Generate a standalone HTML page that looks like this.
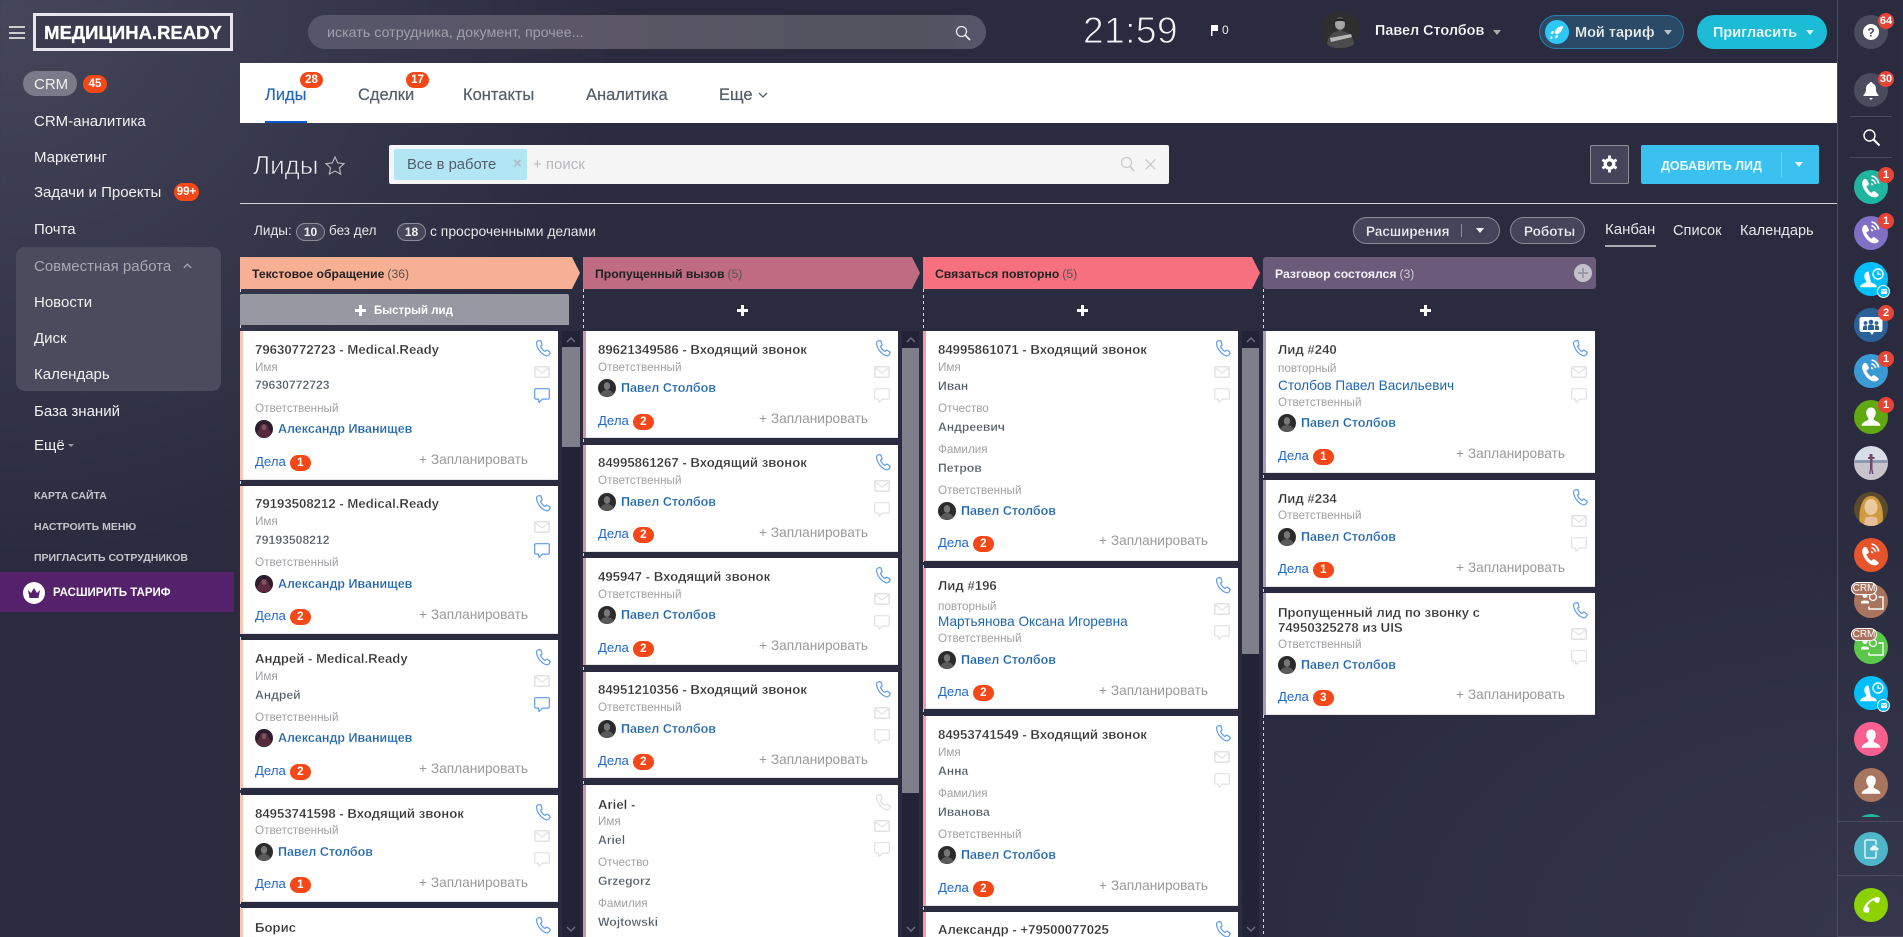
<!DOCTYPE html>
<html lang="ru"><head><meta charset="utf-8"><title>Лиды</title>
<style>
html,body{margin:0;padding:0;width:1903px;height:937px;overflow:hidden}
body{position:relative;font-family:"Liberation Sans","Noto Sans CJK SC",sans-serif;color:#eee;
background:radial-gradient(ellipse 620px 560px at 0 0,#45465a 0,rgba(69,70,90,0) 100%),radial-gradient(ellipse 700px 420px at 100% 100%,#36374d 0,rgba(54,55,77,0) 100%),#2a2b3e}
.a{position:absolute;white-space:nowrap;line-height:20px}
svg{position:absolute;overflow:visible}
.m{left:34px;font-size:15px;color:#f0f0f0;margin-top:1px}
.s{left:34px;font-size:10.5px;font-weight:700;color:#c4c4cc;margin-top:1px}
.tb{top:85px;font-size:16.5px;color:#535c69;-webkit-text-stroke:.2px}
.bd{position:absolute;background:#f54819;color:#fff;font-weight:700;font-size:11.5px;text-align:center;border-radius:10px}
.cnt{top:221px;font-size:13.5px;color:#e6e6ea}
.pl{position:absolute;top:223px;width:27px;height:16px;border:1px solid #8d8e9b;border-radius:9px;background:#45465a;text-align:center;font-size:12px;font-weight:700;line-height:16px;color:#f0f0f0}
.h{position:absolute;top:257px;height:32px;line-height:34px;font-size:12.2px;font-weight:700;color:#222;padding-left:12px;box-sizing:border-box;clip-path:polygon(0 0,calc(100% - 8px) 0,100% 50%,calc(100% - 8px) 100%,0 100%)}
.h span{font-weight:400;color:#555;margin-left:3px}
.dl{position:absolute;top:289px;bottom:0;width:1px;background:linear-gradient(#d8d8de 50%,transparent 50%) 0 0/1px 6px}
.pp{position:absolute;top:305px;font-size:0;width:11px;height:11px;background:linear-gradient(#fff,#fff) center/11px 3px no-repeat,linear-gradient(#fff,#fff) center/3px 11px no-repeat}
.tr{position:absolute;top:331px;bottom:0;width:18px;background:#222336}
.tr u{position:absolute;left:0;width:100%;background:#7f7f8b;display:block}
.tr svg{left:4px}
.c{position:absolute;background:#fff;box-shadow:inset 0 -1px 0 #e4e4e6;overflow:hidden}
.c::before{content:"";position:absolute;left:0;top:0;bottom:0;width:3px}
.c1::before{background:#fcc6b0}.c2::before{background:#d993a5}.c3::before{background:#f99aa4}.c4::before{background:#a89db4}
.c div{position:absolute;left:15px;white-space:nowrap;line-height:20px}
.c .t{font-size:13.2px;font-weight:700;color:#333;margin-top:1px;-webkit-text-stroke:.25px #fff}
.c .l{font-size:11.7px;color:#a0a0a4;margin-top:1px}
.c .v{font-size:12.2px;font-weight:700;color:#535c69;margin-top:1px;-webkit-text-stroke:.25px #fff}
.c .k{font-size:13.6px;color:#1f66b0;margin-top:1px}
.c .n{left:38px;font-size:12.5px;font-weight:700;color:#1f66b0;-webkit-text-stroke:.2px #fff}
.c .d{font-size:13.2px;color:#2067d0}
.c .d i{display:inline-block;position:relative;top:0;margin-left:4px;width:21px;height:16px;line-height:16px;border-radius:8px;background:#f54819;color:#fff;font-style:normal;font-weight:700;font-size:11.5px;text-align:center}
.c .z{left:auto;right:30px;font-size:13.7px;color:#999}
.av{left:15px;width:18px;height:18px}
.ip{right:7px;top:9px;width:16px;height:17px;color:#5d9bea}
.im{right:8px;top:35px;width:16px;height:12px;color:#e2e2e2}
.ich{right:8px;top:57px;width:16px;height:15px;color:#e2e2e2}
.blu{color:#5d9bea}.gry{color:#dedede}
.cr{position:absolute;left:1854px;width:34px;height:34px;border-radius:50%;overflow:visible}
.cr svg{left:0;top:0}
.rb{position:absolute;left:24px;top:-3px;width:16px;height:16px;border-radius:50%;background:#e64436;color:#fff;font-size:11px;font-weight:700;text-align:center;line-height:16px}
.crm{position:absolute;left:-3px;top:-2px;width:24px;height:11px;border:1px solid #fff;border-radius:7px;background:#a8745f;color:#fff;font-size:10px;line-height:11px;text-align:center}
.mb{position:absolute;left:23px;top:23px;width:11px;height:11px;border:1.5px solid #fff;border-radius:50%;background:#00bfff}
.mb svg{left:2.5px;top:2.5px}
.ln{position:absolute;left:1837px;height:1px;background:#494a5e}
.ln2{position:absolute;left:1850px;width:42px;height:1px;background:#494a5e}
</style></head><body>
<svg width="0" height="0" style="position:absolute"><defs>
<symbol id="ph" viewBox="0 0 16 17"><path d="M1.5 3C1.5 2 2.500 1 3.500.8L5 .6c.5 0 .8.2 1 .6l1 3.300c.1.500-.1.900-.5 1.100l-1 .6c.8 2.300 2.500 4.300 4.500 5.300l1-1c.3-.3.800-.4 1.200-.2l2.600 1.700c.4.300.5.800.2 1.200l-1 1.600c-.5.800-1.500 1.200-2.500 1C6.500 14.500 1.800 8.500 1.500 3z" fill="none" stroke="currentColor" stroke-width="1.200" stroke-linejoin="round"/></symbol>
<symbol id="ml" viewBox="0 0 16 12"><rect x=".8" y=".8" width="14.4" height="10.4" rx="1.200" fill="none" stroke="currentColor" stroke-width="1.500"/><path d="M1.500 2l6.500 5 6.500-5" fill="none" stroke="currentColor" stroke-width="1.200"/></symbol>
<symbol id="ch" viewBox="0 0 16 15"><path d="M2 .7h12c.7 0 1.300.6 1.300 1.300v7.800c0 .7-.6 1.300-1.300 1.300H8.500l-3.500 3.300-.5-3.300H2c-.7 0-1.300-.6-1.300-1.300V2C.7 1.300 1.300.7 2 .7z" fill="none" stroke="currentColor" stroke-width="1.200" stroke-linejoin="round"/></symbol>
<symbol id="a1" viewBox="0 0 18 18"><circle cx="9" cy="9" r="9" fill="#2b2b2b"/><ellipse cx="9" cy="7" rx="3.200" ry="3.900" fill="#777"/><path d="M2.500 15.500c1-3.500 4-4.500 6.500-4.500s5.500 1 6.500 4.500c-2 3-11 3-13 0z" fill="#5a5a5a"/></symbol>
<symbol id="a2" viewBox="0 0 18 18"><circle cx="9" cy="9" r="9" fill="#2c1c2c"/><path d="M1 13c2-1 4-5 5-10l3 7 3-7c1 5 3 9 5 10l-5 4H6z" fill="#5a2c3e"/><ellipse cx="9" cy="7" rx="2.300" ry="3" fill="#7c5560"/></symbol>
<symbol id="pf" viewBox="0 0 34 34"><path d="M10.500 9c-1.800 1-2.800 3.200-2 6.500 1 4 4.500 9 8.500 11 2.800 1.500 5.500 1 7.200-.5.700-.7.500-1.600-.2-2.100l-3.300-2.500c-.7-.5-1.500-.4-2.100.2l-1 1.200c-2.200-1-4.400-3.800-5.200-6.400l1.600-.9c.8-.4 1-1.300.7-2.100l-1.700-3.500c-.3-.7-1.700-1.300-2.500-.9z" fill="#fff"/><path d="M17.500 6c3.800.6 6.600 3.600 7.200 7.500M17.500 9.800c2.200.4 3.700 2 4.100 4.200M17 13.500c.9.200 1.400.8 1.600 1.700" fill="none" stroke="#fff" stroke-width="1.600"/></symbol>
<symbol id="pr" viewBox="0 0 34 34"><path d="M17 7.500c-3.200 0-4.800 2.600-4.800 5.300 0 2.100.9 4 2.100 5.200v1.700c-1 1.200-6.300 1.800-6.800 6h19c-.5-4.200-5.800-4.800-6.800-6V18c1.200-1.200 2.100-3.100 2.100-5.200 0-2.700-1.600-5.300-4.800-5.300z" fill="#fff"/></symbol>
<symbol id="cc" viewBox="0 0 34 34"><path d="M14.500 9.500c-2.800 0-4.200 2.400-4.200 4.700 0 1.800.8 3.500 1.800 4.500v1.500c-1 1-5.700 1.600-6.100 5h17c-.4-3.400-5.100-4-6.100-5" fill="#fff"/><circle cx="24" cy="12" r="5" fill="#00bfff" stroke="#fff" stroke-width="1.400"/><path d="M24 9v3.200h2.800" fill="none" stroke="#fff" stroke-width="1.200"/></symbol>
<symbol id="cd" viewBox="0 0 34 34"><rect x="15" y="13" width="14" height="12" fill="none" stroke="#fff" stroke-width="1.400"/><rect x="6" y="9" width="18" height="13" fill="currentColor" stroke="currentColor"/><circle cx="11" cy="11.500" r="2.500" fill="#fff"/><path d="M7 18c0-2 8-2 8 0v1.500H7z" fill="#fff"/><circle cx="19" cy="13" r="3.500" fill="none" stroke="#fff" stroke-width="1.300"/></symbol>
<symbol id="cv" viewBox="0 0 10 6"><path d="M1 5l4-4 4 4" fill="none" stroke="#6b6c78" stroke-width="1.500"/></symbol>
<symbol id="dv" viewBox="0 0 10 6"><path d="M1 1l4 4 4-4" fill="none" stroke="#6b6c78" stroke-width="1.500"/></symbol>
<symbol id="mm" viewBox="0 0 6 5"><path d="M0 0h6v5H0z" fill="#fff"/><path d="M0 .5l3 2 3-2" fill="none" stroke="#00bfff" stroke-width=".7"/></symbol>
</defs></svg>

<!-- header -->
<div style="position:absolute;left:9px;top:26px;width:16px;height:1.5px;background:#ccc"></div>
<div style="position:absolute;left:9px;top:32px;width:16px;height:1.5px;background:#ccc"></div>
<div style="position:absolute;left:9px;top:37px;width:16px;height:1.5px;background:#ccc"></div>
<div style="position:absolute;left:33px;top:13px;width:194px;height:32px;border:3px solid #e6e6ec;background:#3a3b4e;color:#fff;font-weight:700;font-size:18.5px;line-height:33px;text-align:center;white-space:nowrap;-webkit-text-stroke:.3px #fff">МЕДИЦИНА.READY</div>
<div style="position:absolute;left:308px;top:15px;width:678px;height:34px;border-radius:17px;background:linear-gradient(90deg,#55566a,#5b5766 40%,#52535f 90%,#55566a)"></div>
<div class="a" style="left:327px;top:22px;font-size:14px;color:#a0a0ac;transform:scaleX(1.02);transform-origin:0 50%">искать сотрудника, документ, прочее...</div>
<svg style="left:955px;top:25px" width="16" height="16" viewBox="0 0 16 16"><circle cx="6.5" cy="6.5" r="5" fill="none" stroke="#e6e6ea" stroke-width="1.300"/><path d="M10 10l5 5" stroke="#e6e6ea" stroke-width="1.800"/></svg>
<div class="a" style="left:1083px;top:11px;font-size:37px;line-height:40px;color:#f2f2f6;letter-spacing:.5px;-webkit-text-stroke:.9px #2a2b3e">21:59</div>
<svg style="left:1211px;top:25px" width="8" height="11" viewBox="0 0 8 11"><path d="M0 0h7v6H1.500v5H0z" fill="#fff"/></svg>
<div class="a" style="left:1222px;top:20px;font-size:12px;color:#eee">0</div>
<svg style="left:1321px;top:11px" width="39" height="38" viewBox="0 0 39 38"><ellipse cx="19.500" cy="19" rx="19.500" ry="19" fill="#2e2e2e"/><path d="M6 33c1-9 6-13 13-13s13 4 14 13c-4 5-23 6-27 0z" fill="#4b4b4b"/><ellipse cx="19" cy="13" rx="5" ry="6.500" fill="#a5a5a5"/><path d="M14 11c0-5 10-5 10 0-2-1.500-8-1.500-10 0zM15 16c1 3.500 7 3.500 8 0 0 4-8 4-8 0z" fill="#222"/><path d="M9 27l21-4 1 3-21 5z" fill="#b8b8b8"/></svg>
<div class="a" style="left:1375px;top:21px;font-size:14.4px;font-weight:700;color:#fff;-webkit-text-stroke:.2px #2a2b3e">Павел Столбов</div>
<svg style="left:1493px;top:30px" width="8" height="5"><path d="M0 0h8L4 5z" fill="#aaa"/></svg>
<div style="position:absolute;left:1539px;top:15px;width:143px;height:32px;border:1px solid #2b7ca8;border-radius:17px;background:#2a4a68"></div>
<div style="position:absolute;left:1545px;top:20px;width:24px;height:24px;border-radius:50%;background:#2fc7f7"></div>
<svg style="left:1549px;top:24px" width="16" height="16" viewBox="0 0 16 16"><path d="M14 2c-4 .3-7 2.500-8.500 6.500l2 2C11.500 9 13.700 6 14 2zM5 7H3L1.500 10H4zM9 11v2l-3 1.500V12zM2 12l2 2-3 1z" fill="#fff"/></svg>
<div class="a" style="left:1575px;top:23px;font-size:14.5px;font-weight:700;color:#f2f2f2;-webkit-text-stroke:.2px #2a4a68">Мой тариф</div>
<svg style="left:1664px;top:30px" width="8" height="5"><path d="M0 0h8L4 5z" fill="#b8c2cc"/></svg>
<div style="position:absolute;left:1697px;top:15px;width:130px;height:34px;border-radius:17px;background:#1cbcd6"></div>
<div class="a" style="left:1713px;top:23px;font-size:14.5px;font-weight:700;color:#fff;-webkit-text-stroke:.2px #1cbcd6">Пригласить</div>
<svg style="left:1806px;top:30px" width="8" height="5"><path d="M0 0h8L4 5z" fill="#d0f2f8"/></svg>

<!-- sidebar -->
<div style="position:absolute;left:23px;top:71px;width:54px;height:25px;border-radius:13px;background:#7a7b88"></div>
<div class="a m" style="top:74px">CRM</div>
<div class="bd" style="left:83px;top:75px;width:24px;height:18px;line-height:18px">45</div>
<div class="a m" style="top:111px">CRM-аналитика</div>
<div class="a m" style="top:147px">Маркетинг</div>
<div class="a m" style="top:182px">Задачи и Проекты</div>
<div class="bd" style="left:174px;top:183px;width:25px;height:18px;line-height:18px">99+</div>
<div class="a m" style="top:219px">Почта</div>
<div style="position:absolute;left:16px;top:247px;width:205px;height:144px;border-radius:9px;background:#4a4b5c"></div>
<div class="a m" style="top:256px;color:#a9a9b4">Совместная работа</div>
<svg style="left:183px;top:263px" width="9" height="6" viewBox="0 0 10 6"><path d="M1 5l4-4 4 4" fill="none" stroke="#a9a9b4" stroke-width="1.500"/></svg>
<div class="a m" style="top:292px">Новости</div>
<div class="a m" style="top:328px">Диск</div>
<div class="a m" style="top:364px">Календарь</div>
<div class="a m" style="top:401px">База знаний</div>
<div class="a m" style="top:435px">Ещё</div>
<svg style="left:68px;top:444px" width="6" height="3"><path d="M0 0h6L3 3z" fill="#999"/></svg>
<div class="a s" style="top:485px">КАРТА САЙТА</div>
<div class="a s" style="top:516px">НАСТРОИТЬ МЕНЮ</div>
<div class="a s" style="top:547px">ПРИГЛАСИТЬ СОТРУДНИКОВ</div>
<div style="position:absolute;left:0;top:572px;width:234px;height:40px;background:#56216b"></div>
<svg style="left:23px;top:582px" width="22" height="22" viewBox="0 0 22 22"><circle cx="11" cy="11" r="11" fill="#fff"/><path d="M5 8l3 3 3-5 3 5 3-3-1.500 8h-9z" fill="#56216b"/></svg>
<div class="a" style="left:53px;top:583px;font-size:11.5px;font-weight:700;color:#fff">РАСШИРИТЬ ТАРИФ</div>

<!-- tabs -->
<div style="position:absolute;left:240px;top:63px;width:1597px;height:60px;background:#fff"></div>
<div class="a tb" style="left:265px;color:#2067c0">Лиды</div>
<div style="position:absolute;left:265px;top:121px;width:42px;height:2px;background:#1058d0"></div>
<div class="bd" style="left:300px;top:72px;width:23px;height:16px;line-height:16px">28</div>
<div class="a tb" style="left:358px">Сделки</div>
<div class="bd" style="left:406px;top:72px;width:23px;height:16px;line-height:16px">17</div>
<div class="a tb" style="left:463px">Контакты</div>
<div class="a tb" style="left:586px">Аналитика</div>
<div class="a tb" style="left:719px">Еще</div>
<svg style="left:758px;top:92px" width="10" height="6" viewBox="0 0 10 6"><path d="M1 1l4 4 4-4" fill="none" stroke="#535c69" stroke-width="1.300"/></svg>

<!-- title row -->
<div class="a" style="left:253px;top:150px;font-size:26px;line-height:30px;color:#ececf0;-webkit-text-stroke:.6px #2a2b3e">Лиды</div>
<svg style="left:325px;top:156px" width="20" height="19" viewBox="0 0 20 19"><path d="M10 1l2.800 6 6.200.7-4.600 4.200 1.300 6.200L10 15l-5.700 3.100 1.300-6.200L1 7.700 7.200 7z" fill="none" stroke="#b5b5bd" stroke-width="1.200"/></svg>
<div style="position:absolute;left:389px;top:145px;width:780px;height:39px;background:#f5f5f5;border-radius:2px"></div>
<div style="position:absolute;left:394px;top:149px;width:133px;height:31px;background:#b3e6f4;border-radius:2px"></div>
<div class="a" style="left:407px;top:155px;font-size:14.8px;color:#535c69">Все в работе</div>
<div class="a" style="left:513px;top:154px;font-size:15px;font-weight:700;color:#a9bcc6">×</div>
<div class="a" style="left:533px;top:155px;font-size:15px;color:#b8b8bc">+ поиск</div>
<svg style="left:1120px;top:156px" width="15" height="16" viewBox="0 0 15 16"><circle cx="6.5" cy="6.5" r="5" fill="none" stroke="#ccc" stroke-width="1.300"/><path d="M10 10l4 5" stroke="#ccc" stroke-width="1.800"/></svg>
<svg style="left:1145px;top:159px" width="11" height="11"><path d="M.5.5l10 10M10.500.5l-10 10" stroke="#ccc" stroke-width="1.300"/></svg>
<div style="position:absolute;left:1590px;top:145px;width:37px;height:37px;border:1px solid #8a8b97;border-radius:2px;background:#44455a"></div>
<svg style="left:1601px;top:155px" width="17" height="18" viewBox="0 0 18 18"><circle cx="9" cy="9" r="4.500" fill="none" stroke="#fff" stroke-width="3.500"/><path d="M9 0v3M9 15v3M1.500 4.500l2.500 1.500M14 12l2.500 1.500M1.500 13.500L4 12M14 6l2.500-1.500" stroke="#fff" stroke-width="3"/></svg>
<div style="position:absolute;left:1641px;top:145px;width:178px;height:39px;background:#3bc1f0;border-radius:2px"></div>
<div class="a" style="left:1661px;top:156px;font-size:12.5px;font-weight:700;color:#eafaff">ДОБАВИТЬ ЛИД</div>
<div style="position:absolute;left:1781px;top:152px;width:1px;height:25px;background:#6cd2f5"></div>
<svg style="left:1795px;top:162px" width="8" height="5"><path d="M0 0h8L4 5z" fill="#eafaff"/></svg>
<div style="position:absolute;left:240px;top:203px;width:1597px;height:1px;background:#d2d2d8"></div>

<!-- counters -->
<div class="a cnt" style="left:254px">Лиды:</div>
<div class="pl" style="left:296px">10</div>
<div class="a cnt" style="left:329px">без дел</div>
<div class="pl" style="left:397px">18</div>
<div class="a cnt" style="left:430px;font-size:13.9px">с просроченными делами</div>
<div style="position:absolute;left:1353px;top:217px;width:145px;height:25px;border:1px solid #8a8b99;border-radius:14px;background:#44455a"></div>
<div class="a" style="left:1366px;top:222px;font-size:13.5px;font-weight:700;color:#f0f0f4;-webkit-text-stroke:.25px #44455a">Расширения</div>
<div style="position:absolute;left:1461px;top:224px;width:1px;height:13px;background:#8a8b99"></div>
<svg style="left:1476px;top:228px" width="8" height="5"><path d="M0 0h8L4 5z" fill="#f0f0f4"/></svg>
<div style="position:absolute;left:1510px;top:217px;width:73px;height:25px;border:1px solid #8a8b99;border-radius:14px;background:#44455a"></div>
<div class="a" style="left:1524px;top:222px;font-size:13.5px;font-weight:700;color:#f0f0f4;-webkit-text-stroke:.25px #44455a">Роботы</div>
<div class="a" style="left:1605px;top:220px;font-size:15px;color:#e6e6ea">Канбан</div>
<div style="position:absolute;left:1605px;top:245px;width:51px;height:2px;background:#a8a8b0"></div>
<div class="a" style="left:1673px;top:221px;font-size:14.6px;color:#e6e6ea">Список</div>
<div class="a" style="left:1740px;top:221px;font-size:14.6px;color:#e6e6ea">Календарь</div>

<!-- columns -->
<div class="dl" style="left:240px"></div><div class="dl" style="left:583px"></div><div class="dl" style="left:923px"></div><div class="dl" style="left:1263px"></div>
<div class="h" style="left:240px;width:340px;background:#f8b094">Текстовое обращение<span>(36)</span></div>
<div class="h" style="left:583px;width:337px;background:#bf6b81">Пропущенный вызов<span>(5)</span></div>
<div class="h" style="left:923px;width:337px;background:#f6707f">Связаться повторно<span>(5)</span></div>
<div class="h" style="left:1263px;width:333px;background:#6c5a7b;color:#f4f4f6;clip-path:none;border-radius:3px">Разговор состоялся<span style="color:#cfc8d6">(3)</span></div>
<svg style="left:1574px;top:264px" width="18" height="18" viewBox="0 0 18 18"><circle cx="9" cy="9" r="9" fill="#c3c2cc"/><path d="M9 4v10M4 9h10" stroke="#8e8e9c" stroke-width="1.500"/></svg>
<div style="position:absolute;left:240px;top:294px;width:329px;height:31px;background:#9898a2;border-radius:2px 2px 0 0"></div>
<div class="pp" style="left:355px"></div>
<div class="a" style="left:374px;top:301px;font-size:11.5px;font-weight:700;color:#fff">Быстрый лид</div>
<div class="pp" style="left:737px"></div><div class="pp" style="left:1077px"></div><div class="pp" style="left:1420px"></div>

<!-- scrollbars -->
<div class="tr" style="left:562px"><u style="top:16px;height:100px"></u><svg style="top:6px" width="10" height="6"><use href="#cv"/></svg><svg style="top:595px" width="10" height="6"><use href="#dv"/></svg></div>
<div class="tr" style="left:902px;width:17px"><u style="top:17px;height:445px"></u><svg style="top:6px" width="10" height="6"><use href="#cv"/></svg><svg style="top:595px" width="10" height="6"><use href="#dv"/></svg></div>
<div class="tr" style="left:1242px;width:17px"><u style="top:17px;height:306px"></u><svg style="top:6px" width="10" height="6"><use href="#cv"/></svg><svg style="top:595px" width="10" height="6"><use href="#dv"/></svg></div>

<!-- col1 -->
<div class="c c1" style="left:240px;top:331px;width:318px;height:149px">
<div class="t" style="top:8px">79630772723 - Medical.Ready</div><div class="l" style="top:26px">Имя</div><div class="v" style="top:43px">79630772723</div><div class="l" style="top:67px">Ответственный</div>
<svg class="av" style="top:89px"><use href="#a2"/></svg><div class="n" style="top:88px">Александр Иванищев</div>
<div class="d" style="top:121px">Дела<i>1</i></div><div class="z" style="top:119px">+ Запланировать</div>
<svg class="ip"><use href="#ph"/></svg><svg class="im"><use href="#ml"/></svg><svg class="ich blu"><use href="#ch"/></svg></div>

<div class="c c1" style="left:240px;top:486px;width:318px;height:148px">
<div class="t" style="top:7px">79193508212 - Medical.Ready</div><div class="l" style="top:25px">Имя</div><div class="v" style="top:43px">79193508212</div><div class="l" style="top:66px">Ответственный</div>
<svg class="av" style="top:89px"><use href="#a2"/></svg><div class="n" style="top:88px">Александр Иванищев</div>
<div class="d" style="top:120px">Дела<i>2</i></div><div class="z" style="top:119px">+ Запланировать</div>
<svg class="ip"><use href="#ph"/></svg><svg class="im"><use href="#ml"/></svg><svg class="ich blu"><use href="#ch"/></svg></div>

<div class="c c1" style="left:240px;top:640px;width:318px;height:148px">
<div class="t" style="top:8px">Андрей - Medical.Ready</div><div class="l" style="top:26px">Имя</div><div class="v" style="top:44px">Андрей</div><div class="l" style="top:67px">Ответственный</div>
<svg class="av" style="top:89px"><use href="#a2"/></svg><div class="n" style="top:88px">Александр Иванищев</div>
<div class="d" style="top:121px">Дела<i>2</i></div><div class="z" style="top:119px">+ Запланировать</div>
<svg class="ip"><use href="#ph"/></svg><svg class="im"><use href="#ml"/></svg><svg class="ich blu"><use href="#ch"/></svg></div>

<div class="c c1" style="left:240px;top:795px;width:318px;height:107px">
<div class="t" style="top:8px">84953741598 - Входящий звонок</div><div class="l" style="top:25px">Ответственный</div>
<svg class="av" style="top:48px"><use href="#a1"/></svg><div class="n" style="top:47px">Павел Столбов</div>
<div class="d" style="top:79px">Дела<i>1</i></div><div class="z" style="top:78px">+ Запланировать</div>
<svg class="ip"><use href="#ph"/></svg><svg class="im"><use href="#ml"/></svg><svg class="ich"><use href="#ch"/></svg></div>

<div class="c c1" style="left:240px;top:908px;width:318px;height:60px">
<div class="t" style="top:9px">Борис</div><svg class="ip"><use href="#ph"/></svg></div>

<!-- col2 -->
<div class="c c2" style="left:583px;top:331px;width:315px;height:107px">
<div class="t" style="top:8px">89621349586 - Входящий звонок</div><div class="l" style="top:26px">Ответственный</div>
<svg class="av" style="top:48px"><use href="#a1"/></svg><div class="n" style="top:47px">Павел Столбов</div>
<div class="d" style="top:80px">Дела<i>2</i></div><div class="z" style="top:78px">+ Запланировать</div>
<svg class="ip"><use href="#ph"/></svg><svg class="im"><use href="#ml"/></svg><svg class="ich"><use href="#ch"/></svg></div>

<div class="c c2" style="left:583px;top:445px;width:315px;height:107px">
<div class="t" style="top:7px">84995861267 - Входящий звонок</div><div class="l" style="top:25px">Ответственный</div>
<svg class="av" style="top:48px"><use href="#a1"/></svg><div class="n" style="top:47px">Павел Столбов</div>
<div class="d" style="top:79px">Дела<i>2</i></div><div class="z" style="top:78px">+ Запланировать</div>
<svg class="ip"><use href="#ph"/></svg><svg class="im"><use href="#ml"/></svg><svg class="ich"><use href="#ch"/></svg></div>

<div class="c c2" style="left:583px;top:558px;width:315px;height:107px">
<div class="t" style="top:8px">495947 - Входящий звонок</div><div class="l" style="top:26px">Ответственный</div>
<svg class="av" style="top:48px"><use href="#a1"/></svg><div class="n" style="top:47px">Павел Столбов</div>
<div class="d" style="top:80px">Дела<i>2</i></div><div class="z" style="top:78px">+ Запланировать</div>
<svg class="ip"><use href="#ph"/></svg><svg class="im"><use href="#ml"/></svg><svg class="ich"><use href="#ch"/></svg></div>

<div class="c c2" style="left:583px;top:672px;width:315px;height:106px">
<div class="t" style="top:7px">84951210356 - Входящий звонок</div><div class="l" style="top:25px">Ответственный</div>
<svg class="av" style="top:48px"><use href="#a1"/></svg><div class="n" style="top:47px">Павел Столбов</div>
<div class="d" style="top:79px">Дела<i>2</i></div><div class="z" style="top:78px">+ Запланировать</div>
<svg class="ip"><use href="#ph"/></svg><svg class="im"><use href="#ml"/></svg><svg class="ich"><use href="#ch"/></svg></div>

<div class="c c2" style="left:583px;top:785px;width:315px;height:170px">
<div class="t" style="top:9px">Ariel -</div><div class="l" style="top:26px">Имя</div><div class="v" style="top:44px">Ariel</div><div class="l" style="top:67px">Отчество</div><div class="v" style="top:85px">Grzegorz</div><div class="l" style="top:108px">Фамилия</div><div class="v" style="top:126px">Wojtowski</div>
<svg class="ip gry"><use href="#ph"/></svg><svg class="im"><use href="#ml"/></svg><svg class="ich"><use href="#ch"/></svg></div>

<!-- col3 -->
<div class="c c3" style="left:923px;top:331px;width:315px;height:230px">
<div class="t" style="top:8px">84995861071 - Входящий звонок</div><div class="l" style="top:26px">Имя</div><div class="v" style="top:44px">Иван</div><div class="l" style="top:67px">Отчество</div><div class="v" style="top:85px">Андреевич</div><div class="l" style="top:108px">Фамилия</div><div class="v" style="top:126px">Петров</div><div class="l" style="top:149px">Ответственный</div>
<svg class="av" style="top:171px"><use href="#a1"/></svg><div class="n" style="top:170px">Павел Столбов</div>
<div class="d" style="top:202px">Дела<i>2</i></div><div class="z" style="top:200px">+ Запланировать</div>
<svg class="ip"><use href="#ph"/></svg><svg class="im"><use href="#ml"/></svg><svg class="ich"><use href="#ch"/></svg></div>

<div class="c c3" style="left:923px;top:568px;width:315px;height:141px">
<div class="t" style="top:7px">Лид #196</div><div class="l" style="top:28px">повторный</div><div class="k" style="top:43px">Мартьянова Оксана Игоревна</div><div class="l" style="top:60px">Ответственный</div>
<svg class="av" style="top:83px"><use href="#a1"/></svg><div class="n" style="top:82px">Павел Столбов</div>
<div class="d" style="top:114px">Дела<i>2</i></div><div class="z" style="top:113px">+ Запланировать</div>
<svg class="ip"><use href="#ph"/></svg><svg class="im"><use href="#ml"/></svg><svg class="ich"><use href="#ch"/></svg></div>

<div class="c c3" style="left:923px;top:716px;width:315px;height:190px">
<div class="t" style="top:8px">84953741549 - Входящий звонок</div><div class="l" style="top:26px">Имя</div><div class="v" style="top:44px">Анна</div><div class="l" style="top:67px">Фамилия</div><div class="v" style="top:85px">Иванова</div><div class="l" style="top:108px">Ответственный</div>
<svg class="av" style="top:130px"><use href="#a1"/></svg><div class="n" style="top:129px">Павел Столбов</div>
<div class="d" style="top:162px">Дела<i>2</i></div><div class="z" style="top:160px">+ Запланировать</div>
<svg class="ip"><use href="#ph"/></svg><svg class="im"><use href="#ml"/></svg><svg class="ich"><use href="#ch"/></svg></div>

<div class="c c3" style="left:923px;top:912px;width:315px;height:60px">
<div class="t" style="top:7px">Александр - +79500077025</div><svg class="ip"><use href="#ph"/></svg></div>

<!-- col4 -->
<div class="c c4" style="left:1263px;top:331px;width:332px;height:142px">
<div class="t" style="top:8px">Лид #240</div><div class="l" style="top:27px">повторный</div><div class="k" style="top:44px">Столбов Павел Васильевич</div><div class="l" style="top:61px">Ответственный</div>
<svg class="av" style="top:83px"><use href="#a1"/></svg><div class="n" style="top:82px">Павел Столбов</div>
<div class="d" style="top:115px">Дела<i>1</i></div><div class="z" style="top:113px">+ Запланировать</div>
<svg class="ip"><use href="#ph"/></svg><svg class="im"><use href="#ml"/></svg><svg class="ich"><use href="#ch"/></svg></div>

<div class="c c4" style="left:1263px;top:480px;width:332px;height:107px">
<div class="t" style="top:8px">Лид #234</div><div class="l" style="top:25px">Ответственный</div>
<svg class="av" style="top:48px"><use href="#a1"/></svg><div class="n" style="top:47px">Павел Столбов</div>
<div class="d" style="top:79px">Дела<i>1</i></div><div class="z" style="top:78px">+ Запланировать</div>
<svg class="ip"><use href="#ph"/></svg><svg class="im"><use href="#ml"/></svg><svg class="ich"><use href="#ch"/></svg></div>

<div class="c c4" style="left:1263px;top:593px;width:332px;height:122px">
<div class="t" style="top:9px">Пропущенный лид по звонку с</div><div class="t" style="top:24px">74950325278 из UIS</div><div class="l" style="top:41px">Ответственный</div>
<svg class="av" style="top:63px"><use href="#a1"/></svg><div class="n" style="top:62px">Павел Столбов</div>
<div class="d" style="top:94px">Дела<i>3</i></div><div class="z" style="top:92px">+ Запланировать</div>
<svg class="ip"><use href="#ph"/></svg><svg class="im"><use href="#ml"/></svg><svg class="ich"><use href="#ch"/></svg></div>

<!-- right panel -->
<div style="position:absolute;left:1837px;top:0;bottom:0;width:1px;background:#494a5e"></div>
<div class="cr" style="top:15px;background:#4a4b5d"><svg width="34" height="34" viewBox="0 0 34 34"><circle cx="17" cy="17" r="8" fill="#fff"/><text x="17" y="21.5" font-size="12" font-weight="700" text-anchor="middle" font-family="Liberation Sans" fill="#4a4b5d">?</text></svg><div class="rb" style="top:-2px">64</div></div>
<div class="cr" style="top:73px;background:#4a4b5d"><svg width="34" height="34" viewBox="0 0 34 34"><path d="M17 9c-1 0-1.500.7-1.500 1.400-2.500.8-3.500 3-3.500 5.600 0 3-1 4.500-2.500 6v1h15v-1c-1.500-1.500-2.500-3-2.500-6 0-2.600-1-4.800-3.500-5.600C18.500 9.700 18 9 17 9z" fill="#fff"/><path d="M15 25h4l-2 2z" fill="#fff"/></svg><div class="rb" style="top:-2px">30</div></div>
<div class="ln2" style="top:116px"></div>
<svg style="left:1863px;top:129px" width="17" height="17" viewBox="0 0 17 17"><circle cx="6.5" cy="6.5" r="5.500" fill="none" stroke="#fff" stroke-width="1.400"/><path d="M10.500 10.500l6 6" stroke="#fff" stroke-width="2"/></svg>
<div class="ln2" style="top:157px"></div>
<div class="cr" style="top:170px;background:#1fb5a0"><svg width="34" height="34"><use href="#pf"/></svg><div class="rb">1</div></div>
<div class="cr" style="top:216px;background:#7f6fc5"><svg width="34" height="34"><use href="#pf"/></svg><div class="rb">1</div></div>
<div class="cr" style="top:262px;background:#00bfff"><svg width="34" height="34"><use href="#cc"/></svg><div class="mb"><svg width="6" height="5"><use href="#mm"/></svg></div></div>
<div class="cr" style="top:308px;background:#2a6199"><svg width="34" height="34" viewBox="0 0 34 34"><path d="M8 9h18c1.500 0 2.500 1 2.500 2.500v10c0 1.500-1 2.500-2.500 2.500h-6l-2 3-2-3H8c-1.500 0-2.500-1-2.500-2.500v-10C5.500 10 6.500 9 8 9z" fill="#fff"/><g fill="#2a6199"><circle cx="17" cy="14" r="2.300"/><circle cx="11.500" cy="15" r="1.900"/><circle cx="22.500" cy="15" r="1.900"/><path d="M14 22v-3.500c0-1.300 1.300-2 3-2s3 .7 3 2V22zM9 22v-2.800c0-1 1-1.800 2.500-1.800.5 0 1 .1 1.500.3V22zM25 22v-2.800c0-1-1-1.800-2.500-1.800-.5 0-1 .1-1.500.3V22z"/></g></svg><div class="rb">2</div></div>
<div class="cr" style="top:354px;background:#3a9ad6"><svg width="34" height="34"><use href="#pf"/></svg><div class="rb">1</div></div>
<div class="cr" style="top:400px;background:#5fa80f"><svg width="34" height="34"><use href="#pr"/></svg><div class="rb">1</div></div>
<div class="cr" style="top:446px"><svg width="34" height="34" viewBox="0 0 34 34"><defs><clipPath id="cp"><circle cx="17" cy="17" r="17"/></clipPath></defs><g clip-path="url(#cp)"><rect width="34" height="16" fill="#d9dde8"/><rect y="14" width="34" height="20" fill="#c9c4cc"/><rect y="14" width="34" height="3" fill="#8f9ab0"/><path d="M15.500 8h3v3h2v2h-2v10l1 5h-1.500L17 23l-.5 5H15l1-5V13h-2v-2h1.500z" fill="#6c4a6a"/></g></svg></div>
<div class="cr" style="top:492px"><svg width="34" height="34" viewBox="0 0 34 34"><g clip-path="url(#cp)"><rect width="34" height="34" fill="#5c4a2e"/><path d="M6 34c-2-14 1-30 11-30s14 16 11 30z" fill="#d09a40"/><ellipse cx="17" cy="15" rx="6.500" ry="8" fill="#eccaa0"/><path d="M11 26c3-2 9-2 12 0l1 8H10z" fill="#e6bf98"/></g></svg></div>
<div class="cr" style="top:538px;background:#e5542b"><svg width="34" height="34"><use href="#pf"/></svg></div>
<div class="cr" style="top:584px;background:#a8745f;color:#a8745f"><svg width="34" height="34"><use href="#cd"/></svg><div class="crm">CRM</div></div>
<div class="cr" style="top:630px;background:#5ac94a;color:#5ac94a"><svg width="34" height="34"><use href="#cd"/></svg><div class="crm">CRM</div></div>
<div class="cr" style="top:676px;background:#00bfff"><svg width="34" height="34"><use href="#cc"/></svg><div class="mb"><svg width="6" height="5"><use href="#mm"/></svg></div></div>
<div class="cr" style="top:722px;background:#f7608f"><svg width="34" height="34"><use href="#pr"/></svg></div>
<div class="cr" style="top:768px;background:#a8755f"><svg width="34" height="34"><use href="#pr"/></svg></div>
<div style="position:absolute;left:1854px;top:814px;width:34px;height:3px;overflow:hidden"><div style="width:34px;height:34px;border-radius:50%;background:#1fb5a0"></div></div>
<div class="ln" style="top:821px;width:66px"></div>
<div class="cr" style="top:832px;background:#4fb6c9"><svg width="34" height="34" viewBox="0 0 34 34"><rect x="11" y="8" width="11" height="18" rx="1.500" fill="none" stroke="#d8f0f4" stroke-width="1.600"/><path d="M18 19c-1.500 0-2.500-1-2.500-2.200 0-1.200 1-2 2-2 .4-1.200 1.500-2 2.800-2 1.500 0 2.700 1 2.900 2.300 1 .1 1.800.9 1.800 1.900 0 1.100-1 2-2 2z" fill="#e6f6f9" stroke="#4fb6c9"/></svg></div>
<div class="ln" style="top:875px;width:66px"></div>
<div class="cr" style="top:888px;background:#8cd100"><svg width="34" height="34" viewBox="0 0 34 34"><path d="M24 9c1.200.3 1.800 1 1.700 2l-.3 2.500c-.1.800-.8 1.300-1.600 1.200l-2.500-.4c-.6-.1-1-.6-1-1.200v-1c-2.700.2-6.500 4-7 7l1.200.3c.6.200 1 .7.900 1.300l-.4 2.700c-.1.800-.8 1.400-1.600 1.300l-2-.2c-1.500-.2-2.200-1.200-2-2.700C9.500 17 16.500 9.500 24 9z" fill="#fff"/></svg></div>
<div class="ln" style="top:936px;width:66px"></div>
</body></html>
